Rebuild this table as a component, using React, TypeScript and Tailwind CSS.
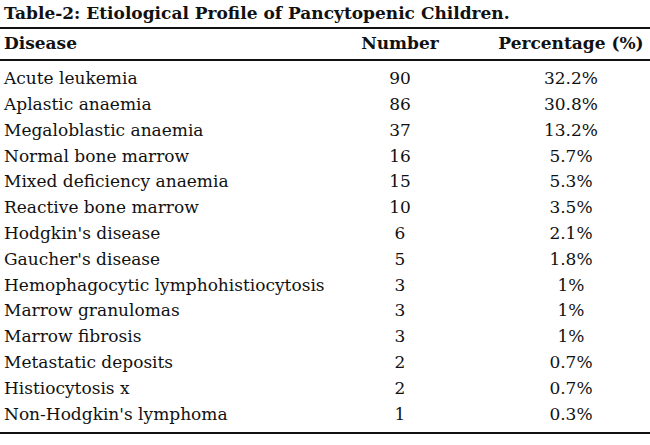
import React from "react";

const rows: [string, string, string][] = [
  ["Acute leukemia", "90", "32.2%"],
  ["Aplastic anaemia", "86", "30.8%"],
  ["Megaloblastic anaemia", "37", "13.2%"],
  ["Normal bone marrow", "16", "5.7%"],
  ["Mixed deficiency anaemia", "15", "5.3%"],
  ["Reactive bone marrow", "10", "3.5%"],
  ["Hodgkin's disease", "6", "2.1%"],
  ["Gaucher's disease", "5", "1.8%"],
  ["Hemophagocytic lymphohistiocytosis", "3", "1%"],
  ["Marrow granulomas", "3", "1%"],
  ["Marrow fibrosis", "3", "1%"],
  ["Metastatic deposits", "2", "0.7%"],
  ["Histiocytosis x", "2", "0.7%"],
  ["Non-Hodgkin's lymphoma", "1", "0.3%"],
];

export default function App() {
  return (
    <div
      className="w-[650px] h-[445px] bg-white text-[#111] overflow-hidden"
      style={{ fontFamily: '"DejaVu Serif", serif' }}
    >
      <div className="h-[27px] pl-[4px] pt-[2px] text-[17px] font-bold leading-[22px] whitespace-nowrap">
        Table-2: Etiological Profile of Pancytopenic Children.
      </div>
      <div className="border-t-2 border-[#111]" />
      <div className="grid grid-cols-[350px_100px_1fr] h-[30px] items-center text-[17px] font-bold">
        <div className="pl-[4px]">Disease</div>
        <div className="text-center">Number</div>
        <div className="text-center pl-[42px]">Percentage (%)</div>
      </div>
      <div className="border-t-2 border-[#111]" />
      <div className="pt-[5px] pb-[5px] text-[17px]">
        {rows.map(([d, n, p]) => (
          <div key={d} className="grid grid-cols-[350px_100px_1fr] h-[25.8px] items-center">
            <div className="pl-[4px] whitespace-nowrap">{d}</div>
            <div className="text-center">{n}</div>
            <div className="text-center pl-[42px]">{p}</div>
          </div>
        ))}
      </div>
      <div className="border-t-2 border-[#111]" />
    </div>
  );
}
